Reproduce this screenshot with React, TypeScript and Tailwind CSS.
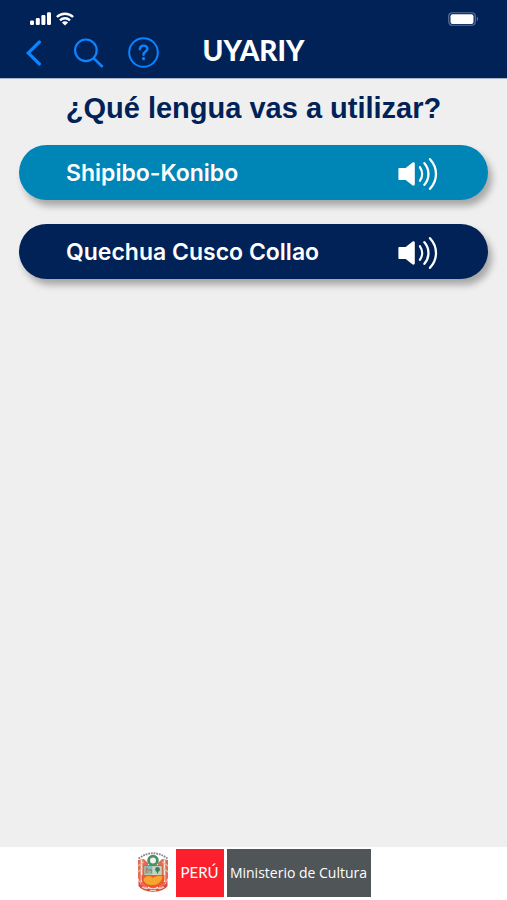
import { useState } from "react";

const languages = [
  { id: "shp", name: "Shipibo-Konibo", color: "bg-[#0085b7]" },
  { id: "quz", name: "Quechua Cusco Collao", color: "bg-[#002257]" },
];

function SignalIcon() {
  return (
    <svg className="w-[22px] h-[14px]" viewBox="0 0 22 14" fill="#fff" aria-hidden="true">
      <rect x="0" y="8.5" width="4" height="4.5" rx="1.2" />
      <rect x="5.8" y="6" width="4" height="7" rx="1.2" />
      <rect x="11.4" y="3" width="4" height="10" rx="1.2" />
      <rect x="17" y="0.3" width="4" height="12.7" rx="1.2" />
    </svg>
  );
}

function WifiIcon() {
  return (
    <svg className="w-[18px] h-[14px]" viewBox="0 0 18 14" fill="none" stroke="#fff" strokeWidth="2.4" aria-hidden="true">
      <path d="M0.9 5a11.6 11.6 0 0 1 16.2 0" />
      <path d="M4 8.3a7.2 7.2 0 0 1 10 0" />
      <path d="M9 13.6 5.9 10.5a4.4 4.4 0 0 1 6.2 0z" fill="#fff" stroke="none" />
    </svg>
  );
}

function BatteryIcon() {
  return (
    <svg className="w-[31px] h-[14px]" viewBox="0 0 31 14" aria-hidden="true">
      <rect x="0.75" y="0.75" width="26.5" height="12.5" rx="3.5" fill="none" stroke="#5c7299" strokeWidth="1.2" />
      <rect x="2.5" y="2.3" width="23" height="9.6" rx="2" fill="#fff" />
      <path d="M28.8 4.8c1.6.5 1.6 3.9 0 4.4z" fill="#5c7299" />
    </svg>
  );
}

function BackIcon() {
  return (
    <svg className="w-4 h-[26px]" viewBox="0 0 16 26" fill="none" stroke="#0a84ff" strokeWidth="3.2" strokeLinecap="round" aria-hidden="true">
      <path d="M13.4 2 2.2 13l11.2 11" />
    </svg>
  );
}

function SearchIcon() {
  return (
    <svg className="w-[30px] h-[30px]" viewBox="0 0 30 30" fill="none" stroke="#0a84ff" strokeWidth="2.2" strokeLinecap="round" aria-hidden="true">
      <circle cx="11.9" cy="12.3" r="10.8" />
      <path d="m19.9 20.4 8 7.8" strokeWidth="2.6" />
    </svg>
  );
}

function HelpIcon() {
  return (
    <svg className="w-[31px] h-[31px]" viewBox="0 0 31 31" fill="none" stroke="#0a84ff" strokeWidth="2" strokeLinecap="round" aria-hidden="true">
      <circle cx="15.5" cy="15.5" r="14.3" />
      <path d="M11.8 12.2c.2-2.4 1.7-3.6 3.8-3.6s3.8 1.3 3.8 3.2c0 2.8-3.9 2.8-3.9 6" strokeWidth="2.4" />
      <circle cx="15.5" cy="21.7" r="1.6" fill="#0a84ff" stroke="none" />
    </svg>
  );
}

function SpeakerIcon() {
  return (
    <svg className="w-10 h-[34px] shrink-0" viewBox="0 0 40 34" fill="none" stroke="#fff" strokeWidth="2.3" strokeLinecap="round" aria-hidden="true">
      <path d="M1.5 11h6.2l6.6-5.3c1.2-.9 2.5-.4 2.5 1v20.6c0 1.4-1.3 1.9-2.5 1L7.7 23H1.5C.8 23 .4 22.6.4 22V12c0-.6.4-1 1.1-1z" fill="#fff" stroke="none" />
      <path d="M22 10.3c2.8 4 2.8 9.4 0 13.4" />
      <path d="M26.4 6.2c5.4 6.2 5.4 15.4 0 21.6" />
      <path d="M32 2.2c8 8.6 8 21 0 29.6" />
    </svg>
  );
}

function CoatOfArms() {
  return (
    <svg className="w-8 h-[41px]" viewBox="0 0 32 41" role="img" aria-label="Escudo del Perú">
      <path d="M1.5 6.5Q16-4 30.5 6.5" fill="none" stroke="#8d8788" strokeWidth="1.8" strokeDasharray="1.8 .9" />
      <path d="M1 8l6-1 4 4v25l-6-2-4-8z" fill="#e5695a" />
      <path d="M31 8l-6-1-4 4v25l6-2 4-8z" fill="#e5695a" />
      <path d="M4.5 8v22M27.5 8v22" stroke="#fbe9e2" strokeWidth="1.6" />
      <path d="M.8 14l6-4M.8 20l5-4M31.2 14l-6-4M31.2 20l-5-4" stroke="#d3c88f" strokeWidth="1.2" />
      <path d="M7 13.5h18v13.5q0 7-9 9-9-2-9-9z" fill="#e8d8c6" stroke="#d6604b" strokeWidth="1" />
      <path d="M7.5 14h8v8.5h-8z" fill="#86bdb4" />
      <path d="M16.5 14h8v8.5h-8z" fill="#b9d6b6" />
      <path d="M9.5 21v-4l2 1h3v3M10 17v-1.5" fill="none" stroke="#a08562" strokeWidth="1.3" />
      <path d="M20.5 21.5V18" stroke="#76614a" strokeWidth="1.2" />
      <circle cx="20.5" cy="17.5" r="2.4" fill="#3d7b61" />
      <path d="M4.5 23h23v5q-2 6-11.500 8-9.500-2-11.500-8z" fill="#ed5a2c" />
      <path d="M6.500 28c1-5 7-5 9.500-2 2.500-2.500 8-2 9.500-1.500-.5 5-5 9-9.500 8.500-4.500.5-8-1-9.500-5z" fill="#f6a52f" />
      <circle cx="16" cy="8.5" r="4.4" fill="#f2f4e9" stroke="#4c8e66" strokeWidth="2.8" />
      <path d="M1.5 28q3 9 14.5 9t14.5-9v6q-3 5-14.5 6-11.5-1-14.5-6z" fill="#dc4a38" />
      <path d="M5 35q3 2 5.5 1.5M27 35q-3 2-5.5 1.5M13 38.5h6" stroke="#f4cfc3" strokeWidth="1.4" fill="none" />
    </svg>
  );
}

export default function App() {
  const [, setSelected] = useState<string | null>(null);

  return (
    <div className="flex min-h-screen flex-col bg-[#efefef] font-['Inter',sans-serif]">
      <header className="bg-[#002257] border-b border-[#a9b5c8]">
        <div className="flex h-9 items-end justify-between pl-[30px] pr-7 pb-[10px]">
          <div className="flex items-center gap-1">
            <SignalIcon />
            <WifiIcon />
          </div>
          <BatteryIcon />
        </div>
        <nav className="grid h-[42px] grid-cols-[1fr_auto_1fr] items-center pb-[9px]">
          <div className="flex items-center pl-[26px]">
            <button type="button" aria-label="Atrás" className="mr-8">
              <BackIcon />
            </button>
            <button type="button" aria-label="Buscar" className="mr-6">
              <SearchIcon />
            </button>
            <button type="button" aria-label="Ayuda">
              <HelpIcon />
            </button>
          </div>
          <span className="pb-[5px] font-['Lato',sans-serif] text-[28px] leading-7 font-black text-white">UYARIY</span>
        </nav>
      </header>

      <main className="flex-1 px-[19px] pt-[11px]">
        <h1 className="text-center font-['Liberation_Sans',sans-serif] text-[29px] leading-9 font-bold text-[#002257]">
          ¿Qué lengua vas a utilizar?
        </h1>
        <div className="mt-[19px] flex flex-col gap-6">
          {languages.map((lang) => (
            <button
              key={lang.id}
              type="button"
              onClick={() => setSelected(lang.id)}
              className={`${lang.color} flex h-[55px] w-full items-center justify-between rounded-full pt-[2px] pr-[50px] pl-[47px] text-left text-[23px] font-semibold text-white shadow-[4px_6px_7px_rgba(0,0,0,0.3)]`}
            >
              {lang.name}
              <SpeakerIcon />
            </button>
          ))}
        </div>
      </main>

      <footer className="flex h-[53px] items-center justify-center gap-[3px] bg-white pb-[2px]">
        <div className="mr-1">
          <CoatOfArms />
        </div>
        <span className="flex h-12 w-12 items-center justify-center bg-[#fc1f2d] font-['Lato',sans-serif] text-[15px] text-white">
          PERÚ
        </span>
        <span className="flex h-12 w-36 items-center justify-center bg-[#505557] font-['Open_Sans',sans-serif] text-sm whitespace-nowrap text-white">
          Ministerio de Cultura
        </span>
      </footer>
    </div>
  );
}
